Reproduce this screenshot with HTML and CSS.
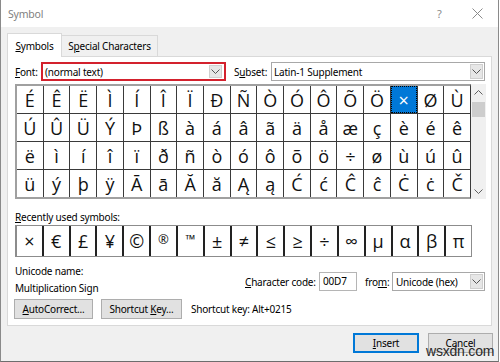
FILE: index.html
```html
<!DOCTYPE html>
<html>
<head>
<meta charset="utf-8">
<link rel="stylesheet" href="styles.css">
</head>
<body>
<div class="window">
  <div class="titlebar">
    <span class="title">Symbol</span>
    <span class="tb-help">?</span>
    <span class="tb-close">
      <svg width="11" height="11" viewBox="0 0 11 11"><path d="M0.5 0.5 L10.5 10.5 M10.5 0.5 L0.5 10.5" stroke="#8a8a8a" stroke-width="1" fill="none"/></svg>
    </span>
  </div>
  <div class="body">
    <div class="tabs">
      <div class="tab active"><u>S</u>ymbols</div>
      <div class="tab">S<u>p</u>ecial Characters</div>
    </div>
    <div class="panel">
      <div class="row font-row">
        <label class="lbl font-lbl"><u>F</u>ont:</label>
        <div class="combo combo-font">
          <span class="combo-text">(normal text)</span>
          <span class="arrow"><svg width="9" height="5" viewBox="0 0 9 5"><path d="M0.5 0.5 L4.5 4.5 L8.5 0.5" stroke="#555" fill="none"/></svg></span>
        </div>
        <label class="lbl subset-lbl">S<u>u</u>bset:</label>
        <div class="combo combo-subset">
          <span class="combo-text">Latin-1 Supplement</span>
          <span class="arrow"><svg width="9" height="5" viewBox="0 0 9 5"><path d="M0.5 0.5 L4.5 4.5 L8.5 0.5" stroke="#555" fill="none"/></svg></span>
        </div>
      </div>
      <div class="grid-area">
        <div class="grid">
          <span>É</span><span>Ê</span><span>Ë</span><span>Ì</span><span>Í</span><span>Î</span><span>Ï</span><span>Ð</span><span>Ñ</span><span>Ò</span><span>Ó</span><span>Ô</span><span>Õ</span><span>Ö</span><span class="sel">×</span><span>Ø</span><span>Ù</span>
          <span>Ú</span><span>Û</span><span>Ü</span><span>Ý</span><span>Þ</span><span>ß</span><span>à</span><span>á</span><span>â</span><span>ã</span><span>ä</span><span>å</span><span>æ</span><span>ç</span><span>è</span><span>é</span><span>ê</span>
          <span>ë</span><span>ì</span><span>í</span><span>î</span><span>ï</span><span>ð</span><span>ñ</span><span>ò</span><span>ó</span><span>ô</span><span>õ</span><span>ö</span><span>÷</span><span>ø</span><span>ù</span><span>ú</span><span>û</span>
          <span>ü</span><span>ý</span><span>þ</span><span>ÿ</span><span>Ā</span><span>ā</span><span>Ă</span><span>ă</span><span>Ą</span><span>ą</span><span>Ć</span><span>ć</span><span>Ĉ</span><span>ĉ</span><span>Ċ</span><span>ċ</span><span>Č</span>
        </div>
        <div class="scrollbar">
          <span class="sb-btn"><svg width="9" height="5" viewBox="0 0 9 5"><path d="M0.5 4.5 L4.5 0.5 L8.5 4.5" stroke="#606060" fill="none"/></svg></span>
          <span class="sb-thumb"></span>
          <span class="sb-fill"></span>
          <span class="sb-btn"><svg width="9" height="5" viewBox="0 0 9 5"><path d="M0.5 0.5 L4.5 4.5 L8.5 0.5" stroke="#606060" fill="none"/></svg></span>
        </div>
      </div>
      <div class="lbl recent-lbl"><u>R</u>ecently used symbols:</div>
      <div class="recent">
        <span>×</span><span>€</span><span>£</span><span>¥</span><span>©</span><span class="small">®</span><span class="small">™</span><span>±</span><span>≠</span><span>≤</span><span>≥</span><span>÷</span><span>∞</span><span>µ</span><span>α</span><span>β</span><span>π</span>
      </div>
      <div class="info-row">
        <div class="uname">
          <div class="lbl">Unicode name:</div>
          <div class="lbl">Multiplication Sign</div>
        </div>
        <div class="code-group">
          <label class="lbl"><u>C</u>haracter code:</label>
          <div class="input">00D7</div>
          <label class="lbl from-lbl">fro<u>m</u>:</label>
          <div class="combo combo-from">
            <span class="combo-text">Unicode (hex)</span>
            <span class="arrow"><svg width="9" height="5" viewBox="0 0 9 5"><path d="M0.5 0.5 L4.5 4.5 L8.5 0.5" stroke="#555" fill="none"/></svg></span>
          </div>
        </div>
      </div>
      <div class="btn-row">
        <button class="btn btn-auto"><u>A</u>utoCorrect...</button>
        <button class="btn btn-short">Shortcut <u>K</u>ey...</button>
        <span class="lbl shortcut-text">Shortcut key: Alt+0215</span>
      </div>
    </div>
    <div class="footer">
      <button class="btn btn-insert"><u>I</u>nsert</button>
      <button class="btn btn-cancel">Cancel</button>
    </div>
  </div>
  <div class="watermark">wsxdn.com</div>
</div>
</body>
</html>
```
FILE: styles.css
```css
* { box-sizing: border-box; }
html, body { margin: 0; padding: 0; }
body {
  width: 500px;
  height: 362px;
  overflow: hidden;
  background: #ffffff;
  font-family: "Noto Sans", "Open Sans", sans-serif;
  font-size: 10px;
  letter-spacing: -0.2px;
  color: #000;
}
u { text-decoration: underline; text-underline-offset: 1px; }

.window {
  position: relative;
  width: 499px;
  height: 362px;
  border-left: 1px solid #8a8a8a;
  border-right: 1px solid #8a8a8a;
  border-bottom: 1px solid #6d6d6d;
  display: flex;
  flex-direction: column;
}

.titlebar {
  height: 27px;
  background: #fff;
  display: flex;
  align-items: center;
  padding-left: 7px;
  flex: none;
}
.title { color: #7f7f7f; font-size: 10.5px; flex: 1; }
.tb-help { color: #8a8a8a; font-size: 11px; width: 35px; }
.tb-close { width: 26px; display: flex; align-items: center; }

.body {
  flex: 1;
  background: #f0f0f0;
  padding: 6px 0 0 6px;
}

.tabs {
  display: flex;
  align-items: flex-end;
  height: 23px;
  position: relative;
  z-index: 2;
}
.tab {
  height: 21px;
  display: flex;
  align-items: center;
  border: 1px solid #d9d9d9;
  border-bottom: none;
  background: #f0f0f0;
  margin-left: -1px;
  width: 97px;
  justify-content: center;
  white-space: nowrap;
}
.tab.active {
  background: #fff;
  height: 24px;
  margin-bottom: -1px;
  margin-left: 0;
  width: 55px;
}

.panel {
  width: 485px;
  height: 270px;
  background: #fff;
  border: 1px solid #d9d9d9;
  padding: 5px 0 0 7px;
  position: relative;
  z-index: 1;
}

.row { display: flex; align-items: center; }
.font-row { height: 19px; }
.lbl { line-height: 16px; white-space: nowrap; }
.font-lbl { width: 26px; }
.combo {
  height: 19px;
  border: 1px solid #a8a8a8;
  background: #fff;
  display: flex;
  align-items: center;
  padding-left: 2px;
}
.combo-text { flex: 1; white-space: nowrap; }
.arrow {
  width: 13px;
  height: 15px;
  background: #e6e6e6;
  border: 1px solid #cfcfcf;
  display: flex;
  align-items: center;
  justify-content: center;
  margin-right: 1px;
}
.combo-font {
  width: 185px;
  border: 2px solid #d3212d;
}
.combo-font .arrow { margin-right: 2px; height: 13px; }
.subset-lbl { margin-left: 8px; width: 37px; }
.combo-subset { width: 214px; }

.grid-area {
  display: flex;
  margin-top: 3px;
  height: 115px;
}
.grid {
  width: 456px;
  height: 115px;
  display: grid;
  grid-template-columns: repeat(17, 1fr);
  grid-template-rows: repeat(4, 1fr);
  gap: 1px;
  background: #3a3a3a;
  border-top: 2px solid #a0a0a0;
  border-left: 2px solid #a0a0a0;
  border-bottom: 2px solid #a0a0a0;
  border-right: 1px solid #3a3a3a;
}
.grid span, .recent span {
  background: #fff;
  display: flex;
  align-items: center;
  justify-content: center;
  font-family: "Open Sans", "Noto Sans", sans-serif;
  font-size: 18px;
  letter-spacing: 0;
  color: #111;
}
.recent span.small { font-size: 13px; align-items: flex-start; padding-top: 4px; }
.grid span.sel {
  background: #0078d7;
  color: #fff;
  outline: 1px dotted #000;
  outline-offset: -1px;
}

.scrollbar {
  width: 15px;
  height: 115px;
  background: #f0f0f0;
  display: flex;
  flex-direction: column;
  align-items: center;
}
.sb-btn {
  height: 16px;
  width: 15px;
  display: flex;
  align-items: center;
  justify-content: center;
}
.sb-thumb {
  width: 13px;
  height: 15px;
  background: #cdcdcd;
  margin-top: 2px;
}
.sb-fill { flex: 1; }

.recent-lbl { margin-top: 10px; }
.recent {
  width: 457px;
  height: 32px;
  display: grid;
  grid-template-columns: repeat(17, 1fr);
  gap: 2px;
  background: #222;
  border: 1px solid #8c8c8c;
  border-left: 2px solid #8c8c8c;
}

.info-row {
  display: flex;
  align-items: flex-start;
  margin-top: 6px;
}
.uname { width: 230px; display: flex; flex-direction: column; gap: 1px; }
.code-group {
  display: flex;
  align-items: center;
  margin-top: 9px;
}
.code-group > .lbl:first-child { width: 72px; }
.input {
  width: 38px;
  height: 19px;
  border: 1px solid #b5b5b5;
  margin-left: 2px;
  padding-left: 3px;
  line-height: 17px;
}
.from-lbl { margin-left: 8px; width: 27px; }
.combo-from { width: 93px; padding-left: 3px; }

.btn-row {
  display: flex;
  align-items: center;
  margin-top: 3px;
  margin-left: -1px;
}
.btn {
  height: 20px;
  background: #e1e1e1;
  border: 1px solid #adadad;
  font-family: "Noto Sans", "Open Sans", sans-serif;
  font-size: 10px;
  letter-spacing: -0.2px;
  color: #000;
  padding: 0;
  line-height: 16px;
  white-space: nowrap;
}
.btn-auto { width: 79px; }
.btn-short { width: 81px; margin-left: 8px; }
.shortcut-text { margin-left: 9px; }

.footer {
  width: 486px;
  display: flex;
  justify-content: flex-end;
  gap: 9px;
  margin-top: 7px;
}
.btn-insert {
  width: 66px;
  border: 2px solid #0078d7;
}
.btn-cancel { width: 65px; }

.watermark {
  position: absolute;
  left: 425px;
  top: 343px;
  font-family: "Liberation Sans", sans-serif;
  font-size: 14px;
  color: #2a2a2a;
}
```
